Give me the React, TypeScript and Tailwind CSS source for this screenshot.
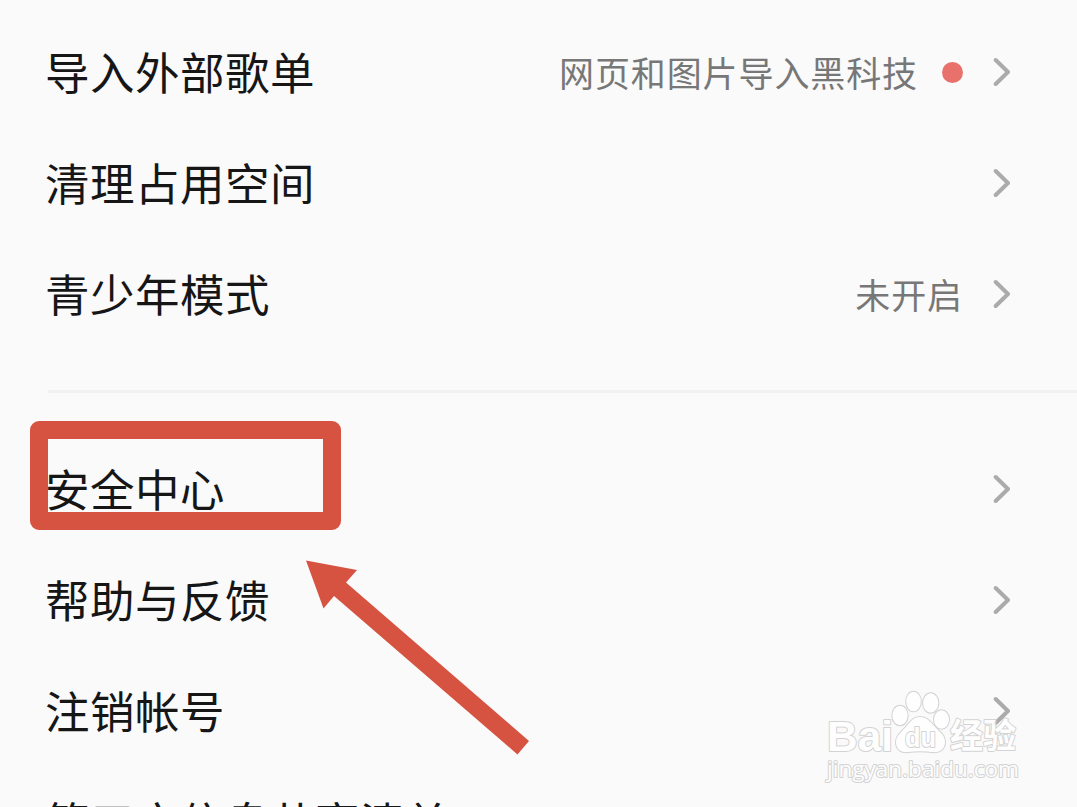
interface Row { label: string; hint?: string; dot?: boolean }

const GENERAL: Row[] = [
  { label: '导入外部歌单', hint: '网页和图片导入黑科技', dot: true },
  { label: '清理占用空间' },
  { label: '青少年模式', hint: '未开启' },
]

const ACCOUNT: Row[] = [
  { label: '安全中心' },
  { label: '帮助与反馈' },
  { label: '注销帐号' },
  { label: '第三方信息共享清单' },
]

function Chevron() {
  return (
    <svg width="18" height="30" viewBox="0 0 18 30" fill="none" stroke="#ababab" strokeWidth="4" strokeLinecap="round" strokeLinejoin="round" className="shrink-0">
      <path d="M2.7 3l12.3 12-12.3 12" />
    </svg>
  )
}

function SettingRow({ label, hint, dot }: Row) {
  return (
    <button className="flex h-[111px] w-full shrink-0 items-center pr-[66px] pl-[45px] text-left">
      <span className="flex-1 pb-px text-[44.5px] leading-none tracking-[0.5px] whitespace-nowrap text-[#161616]">{label}</span>
      {hint && <span className="pb-px text-[35px] leading-none tracking-[0.9px] text-[#777]">{hint}</span>}
      {dot && <span className="mt-px ml-[24px] h-[21px] w-[21px] rounded-full bg-[#e9716c]" />}
      <span className="ml-[30px]"><Chevron /></span>
    </button>
  )
}

function Watermark() {
  return (
    <svg width="200" height="100" viewBox="0 0 200 100" className="absolute top-[688px] left-[823px] opacity-80" fill="#fff" stroke="#cacaca" strokeWidth="2" paintOrder="stroke" strokeLinejoin="round" fontFamily='"Liberation Sans", "Noto Sans CJK SC", sans-serif'>
      <text x="4" y="63" fontSize="42" fontWeight="700" textLength="66" lengthAdjust="spacingAndGlyphs">Bai</text>
      <ellipse cx="77" cy="27.5" rx="7.7" ry="9.7" />
      <ellipse cx="90.5" cy="13.5" rx="7.3" ry="9.8" />
      <ellipse cx="107.7" cy="15" rx="7.7" ry="9.7" />
      <ellipse cx="118.5" cy="31.5" rx="7.5" ry="9.3" />
      <path d="M97 29c-8 0-11 7-16 12-5 5-8 8-8 13 0 8 6 11 12 10 8-1 16-1 24 0 8 1 13-3 13-10 0-6-4-9-8-13-5-5-9-12-17-12z" />
      <text x="82" y="59" fontSize="28" fontWeight="700" textLength="31" lengthAdjust="spacingAndGlyphs">du</text>
      <text x="127" y="60" fontSize="34" fontWeight="700" textLength="66" lengthAdjust="spacingAndGlyphs">经验</text>
      <text x="4" y="89" fontSize="22" fontFamily='"Open Sans", "Noto Sans", sans-serif' textLength="192" lengthAdjust="spacingAndGlyphs">jingyan.baidu.com</text>
    </svg>
  )
}

export default function App() {
  return (
    <main className="relative flex h-[807px] w-[1077px] flex-col overflow-hidden bg-[#fafafa] pt-[16px] font-['Noto_Sans_CJK_SC',sans-serif]">
      {GENERAL.map(r => <SettingRow key={r.label} {...r} />)}
      <div className="mt-[41px] mb-[40px] ml-[48px] h-[3px] shrink-0 bg-[#f1f1f1]" />
      {ACCOUNT.map(r => <SettingRow key={r.label} {...r} />)}

      {/* highlight around the security entry, with its pointer */}
      <div className="absolute top-[421px] left-[30px] h-[109px] w-[311px] rounded-[9px] border-[18px] border-[#d75341]" />
      <svg width="224" height="196" viewBox="0 0 224 196" fill="#d75341" className="absolute top-[560px] left-[306px]">
        <path d="M0 .5L51 10 40 22.5 223 181 211.5 194.5 28 36 17.5 48.5z" />
      </svg>
      <Watermark />
    </main>
  )
}
